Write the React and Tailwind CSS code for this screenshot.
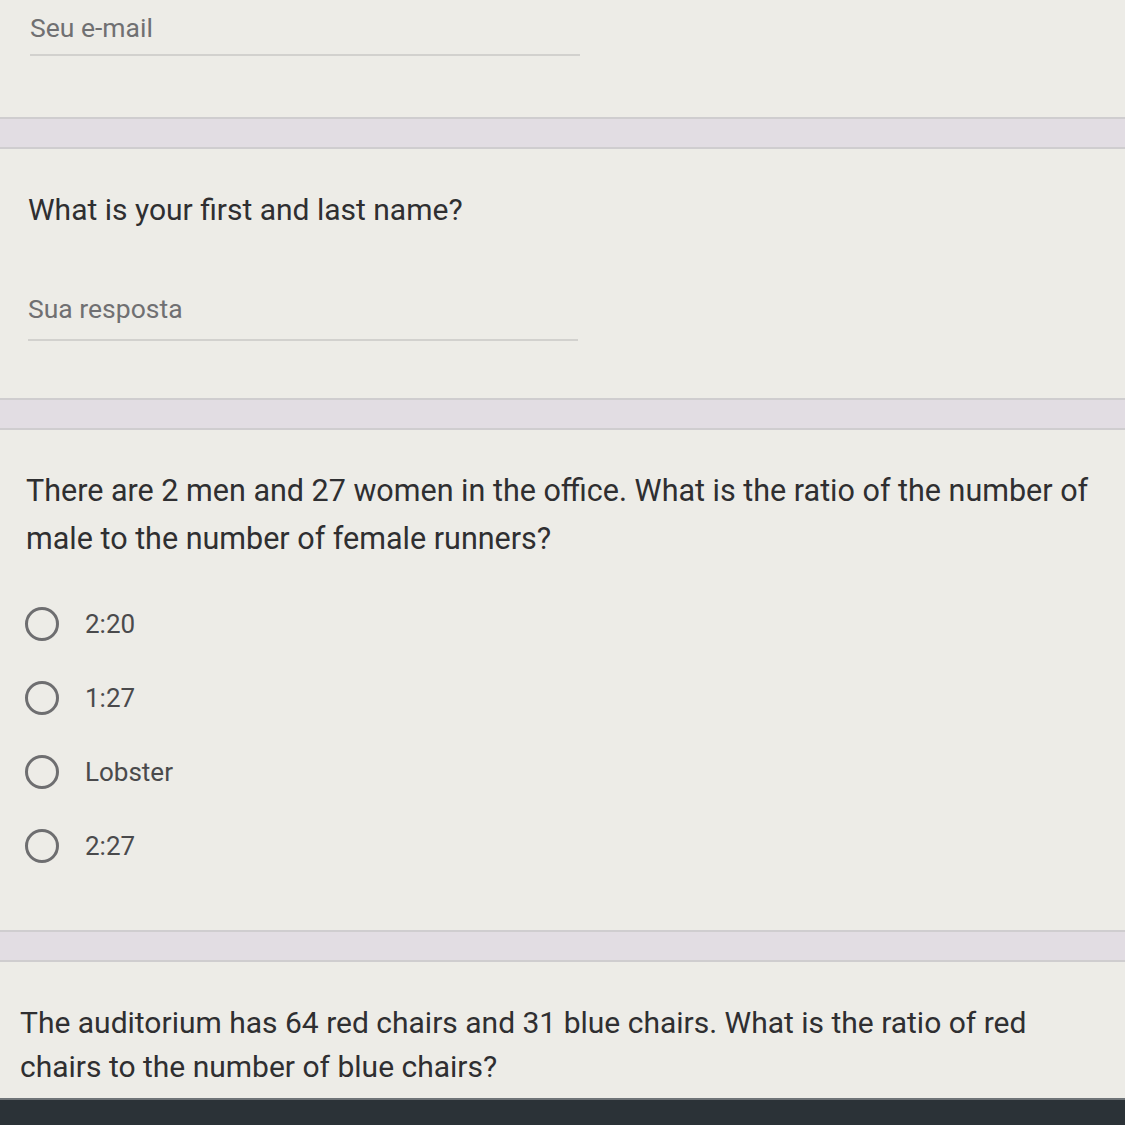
const options = ['2:20', '1:27', 'Lobster', '2:27'];

function Band() {
	return (
		<div className="h-[32px] w-full bg-[#e2dde3] border-y-2 border-[#cfcdcf]" />
	);
}

function Radio({ label }) {
	return (
		<div className="flex items-center h-[74px]">
			<div className="w-[34px] h-[34px] rounded-full border-[3px] border-[#6e6e70] ml-[23px]" />
			<span className="ml-[26px] text-[26px] text-[#4a4a4c]">{label}</span>
		</div>
	);
}

export default function App() {
	return (
		<div
			className="w-[1125px] h-[1125px] overflow-hidden bg-[#edece7] flex flex-col"
			style={{ fontFamily: 'Roboto, "Liberation Sans", sans-serif' }}
		>
			<div className="pt-[11px] pl-[30px] h-[117px]">
				<div className="text-[26.5px] leading-[34px] text-[#707072]">Seu e-mail</div>
				<div className="mt-[9px] w-[550px] h-[2px] bg-[#d2d1ce]" />
			</div>
			<Band />
			<div className="pl-[28px] h-[249px]">
				<div className="mt-[41px] text-[30px] leading-[40px] text-[#2f2f31]">
					What is your first and last name?
				</div>
				<div className="mt-[62px] text-[26.5px] leading-[34px] text-[#707072]">Sua resposta</div>
				<div className="mt-[13px] w-[550px] h-[2px] bg-[#d2d1ce]" />
			</div>
			<Band />
			<div className="pl-[2px] h-[500px]">
				<div className="mt-[37px] pl-[24px] text-[30.5px] leading-[48px] text-[#2f2f31] pr-[20px]">
					There are 2 men and 27 women in the office. What is the ratio of the number of male to the number of female runners?
				</div>
				<div className="mt-[24px] flex flex-col">
					{options.map((o) => (
						<Radio key={o} label={o} />
					))}
				</div>
			</div>
			<Band />
			<div className="pl-[20px] pr-[80px] h-[136px]">
				<div className="mt-[39px] text-[30px] leading-[44px] text-[#2f2f31]">
					The auditorium has 64 red chairs and 31 blue chairs. What is the ratio of red chairs to the number of blue chairs?
				</div>
			</div>
			<div className="flex-1 bg-[#2b3237] border-t-2 border-[#6f7478]" />
		</div>
	);
}
